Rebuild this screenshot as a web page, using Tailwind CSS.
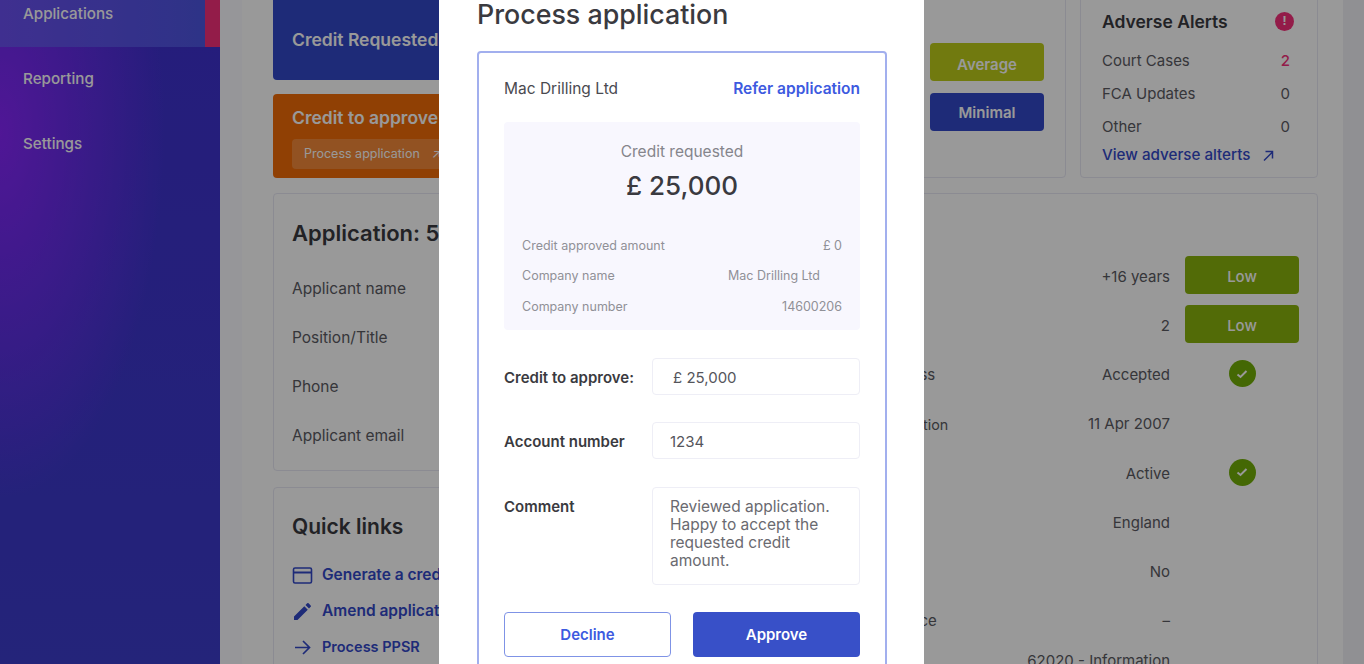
<!DOCTYPE html>
<html lang="en">
<head>
    <meta charset="UTF-8">
    <title>Process application</title>
    <script src="https://cdn.jsdelivr.net/npm/@tailwindcss/browser@4"></script>
</head>
<body class="relative h-[664px] w-[1364px] overflow-hidden bg-white font-['Inter',sans-serif] text-[#3a3a40]">

<!-- page behind the dialog -->
<div class="flex h-[664px]">
    <aside class="w-[220px] shrink-0 bg-[radial-gradient(ellipse_75%_55%_at_0%_20%,#8526fa,transparent),linear-gradient(180deg,#3f30cf,#3c3ccb)] text-[15.2px] font-medium text-white">
        <div class="-mt-[18px] flex h-[65px]">
            <a href="#" class="flex flex-1 items-center bg-[linear-gradient(90deg,#6a4ff0,#4d55e1)] pl-[23px]">Applications</a>
            <div class="w-[15px] bg-[#f5307a]"></div>
        </div>
        <a href="#" class="flex h-[65px] items-center pl-[23px]">Reporting</a>
        <a href="#" class="flex h-[65px] items-center pl-[23px]">Settings</a>
    </aside>

    <div class="w-[22px] shrink-0 bg-[#fbfbff]"></div>

    <main class="-mt-[20px] w-[1101px] shrink-0 pl-[31px] pr-[25px] text-[15px]">
        <!-- top row -->
        <div class="grid h-[198px] grid-cols-[367px_412px_238px] gap-x-[14px]">
            <div class="flex flex-col gap-[14px]">
                <div class="flex h-[100px] items-end rounded bg-[#3349c8] pb-[27px] pl-[19px] text-[17.5px] font-semibold text-white">Credit Requested</div>
                <div class="h-[84px] rounded bg-[#f06c08] pl-[19px] pt-[11px] text-white">
                    <p class="text-[17.5px] font-semibold">Credit to approve</p>
                    <a href="#" class="mt-[8px] flex h-[30px] w-[170px] items-center gap-3 rounded-sm bg-white/20 pl-[12px] text-[12.5px]">Process application <span>↗</span></a>
                </div>
            </div>
            <div class="flex flex-col items-end gap-[12px] rounded border border-[#e8e8f4] pr-[21px] pt-[62px]">
                <div class="flex h-[38px] w-[114px] items-center justify-center rounded bg-[#bccb1a] pt-[6px] font-semibold text-white">Average</div>
                <div class="flex h-[38px] w-[114px] items-center justify-center rounded bg-[#3349c8] pt-[3px] font-semibold text-white">Minimal</div>
            </div>
            <div class="rounded border border-[#e8e8f4] pl-[21px] pr-[27px] pt-[28px] text-[#5a5a62]">
                <div class="flex items-center justify-between">
                    <h3 class="text-[17.5px] font-semibold text-[#3a3a40]">Adverse Alerts</h3>
                    <span class="-mr-[4px] -mt-[2px] flex h-[19px] w-[19px] items-center justify-center rounded-full bg-[#f5307a] text-[12px] font-bold text-white">!</span>
                </div>
                <div class="mt-[16px] flex flex-col gap-[14px]">
                    <div class="flex h-[19px] items-center justify-between"><span>Court Cases</span><span class="font-medium text-[#f5307a]">2</span></div>
                    <div class="flex h-[19px] items-center justify-between"><span>FCA Updates</span><span>0</span></div>
                    <div class="flex h-[19px] items-center justify-between"><span>Other</span><span>0</span></div>
                </div>
                <a href="#" class="mt-[8px] flex items-center gap-3 text-[15.2px] font-medium text-[#3349c8]">View adverse alterts
                    <svg class="h-3 w-3" viewBox="0 0 12 12" fill="none" stroke="currentColor" stroke-width="1.5"><path d="M2 10.500L10.500 2M3.500 1.500h7v7"/></svg>
                </a>
            </div>
        </div>

        <!-- lower row -->
        <div class="mt-[15px] grid grid-cols-[367px_664px] gap-x-[14px]">
            <div class="flex flex-col gap-[16px]">
                <section class="h-[278px] rounded border border-[#e8e8f4] pl-[18px] pt-[24px] text-[15.5px] text-[#5a5a62]">
                    <h2 class="text-[22px] font-semibold leading-[30px] text-[#3a3a40]">Application: 5482</h2>
                    <div class="mt-[16px] flex flex-col">
                        <p class="flex h-[49px] items-center">Applicant name</p>
                        <p class="flex h-[49px] items-center">Position/Title</p>
                        <p class="flex h-[49px] items-center">Phone</p>
                        <p class="flex h-[49px] items-center">Applicant email</p>
                    </div>
                </section>
                <section class="h-[200px] rounded border border-[#e8e8f4] pl-[18px] pt-[24px]">
                    <h2 class="text-[21px] font-semibold leading-[30px]">Quick links</h2>
                    <div class="mt-[15px] flex flex-col text-[15.5px] font-semibold text-[#3349c8]">
                        <a href="#" class="flex h-[36px] items-center gap-[9px]">
                            <svg class="h-[21px] w-[21px]" viewBox="0 0 21 21" fill="none" stroke="currentColor" stroke-width="1.600"><rect x="1.500" y="3" width="18" height="15" rx="1.500"/><path d="M1.500 7.500h18" stroke-width="2"/></svg>
                            Generate a credit report
                        </a>
                        <a href="#" class="flex h-[36px] items-center gap-[9px]">
                            <svg class="h-[21px] w-[21px]" viewBox="0 0 21 21" fill="currentColor"><path d="M2 15.500V19h3.500L15.800 8.700l-3.500-3.500L2 15.500zM18.700 5.800a1 1 0 0 0 0-1.400l-2.100-2.100a1 1 0 0 0-1.400 0l-1.700 1.700 3.500 3.500 1.700-1.700z"/></svg>
                            Amend application
                        </a>
                        <a href="#" class="flex h-[36px] items-center gap-[9px] text-[14.5px]">
                            <svg class="h-[21px] w-[21px]" viewBox="0 0 21 21" fill="none" stroke="currentColor" stroke-width="1.700"><path d="M3 10.500h14.500M11 4l6.500 6.500L11 17"/></svg>
                            Process PPSR
                        </a>
                    </div>
                </section>
            </div>
            <section class="rounded border border-[#e8e8f4] pl-[150px] pr-[18px] pt-[56px] text-[#5a5a62]">
                <div class="flex h-[49.2px] items-center"><span class="flex-1"></span><span class="mt-[5px]">+16 years</span><div class="ml-[15px] flex h-[38px] w-[114px] items-center justify-center rounded bg-[#89b20c] pt-[5px] font-medium text-white">Low</div></div>
                <div class="flex h-[49.2px] items-center"><span class="flex-1"></span><span class="mt-[5px]">2</span><div class="ml-[15px] flex h-[38px] w-[114px] items-center justify-center rounded bg-[#89b20c] pt-[5px] font-medium text-white">Low</div></div>
                <div class="flex h-[49.2px] items-center"><span class="mt-[5px] flex-1">Terms of business</span><span class="mt-[5px]">Accepted</span>
                    <div class="ml-[15px] flex w-[114px] justify-center"><span class="mt-[2px] flex h-[27px] w-[27px] items-center justify-center rounded-full bg-[#72ad08]"><svg class="h-[14px] w-[14px]" viewBox="0 0 14 14" fill="none" stroke="#fff" stroke-width="2"><path d="M2.500 7.500l3 2.500 6-6"/></svg></span></div></div>
                <div class="flex h-[49.2px] items-center"><span class="mt-[5px] flex-1 text-[14.3px]">Date of incorporation</span><span class="mt-[5px]">11 Apr 2007</span><div class="ml-[15px] w-[114px]"></div></div>
                <div class="flex h-[49.2px] items-center"><span class="flex-1"></span><span class="mt-[5px]">Active</span>
                    <div class="ml-[15px] flex w-[114px] justify-center"><span class="mt-[2px] flex h-[27px] w-[27px] items-center justify-center rounded-full bg-[#72ad08]"><svg class="h-[14px] w-[14px]" viewBox="0 0 14 14" fill="none" stroke="#fff" stroke-width="2"><path d="M2.500 7.500l3 2.500 6-6"/></svg></span></div></div>
                <div class="flex h-[49.2px] items-center"><span class="flex-1"></span><span class="mt-[5px]">England</span><div class="ml-[15px] w-[114px]"></div></div>
                <div class="flex h-[49.2px] items-center"><span class="flex-1"></span><span class="mt-[5px]">No</span><div class="ml-[15px] w-[114px]"></div></div>
                <div class="flex h-[49.2px] items-center"><span class="mt-[5px] flex-1">Place of residence</span><span class="mt-[5px]">–</span><div class="ml-[15px] w-[114px]"></div></div>
                <div class="flex h-[49.2px] items-center"><span class="flex-1"></span><span class="-mt-[14px]">62020 - Information</span><div class="ml-[15px] w-[114px]"></div></div>
            </section>
        </div>
    </main>

    <div class="w-[21px] shrink-0 bg-[#f0f0f6]"></div>
</div>

<!-- dialog -->
<div class="absolute inset-0 bg-black/40">
    <div class="ml-[439px] h-[664px] w-[485px] bg-white pl-[38px] pr-[37px]">
        <h1 class="text-[26.8px] font-medium leading-[28px]">Process application</h1>
        <div class="mt-[23px] h-[640px] rounded border-2 border-[#a2afee] px-[25px] pt-[24px]">
            <div class="flex items-center justify-between text-[15.5px] text-[#4a4a50]">
                <span>Mac Drilling Ltd</span>
                <a href="#" class="font-semibold text-[#3d5ae0]">Refer application</a>
            </div>
            <div class="mt-[22px] h-[208px] rounded-sm bg-[#f8f7fe] px-[18px] pt-[18px]">
                <p class="text-center text-[15.5px] text-[#85858c]">Credit requested</p>
                <p class="mt-[5px] text-center text-[26px] font-medium leading-[34px]">£ 25,000</p>
                <div class="mt-[35px] flex flex-col gap-[13.5px] text-[12.5px] text-[#909097]">
                    <div class="flex h-[17px] items-center justify-between"><span>Credit approved amount</span><span>£ 0</span></div>
                    <div class="flex h-[17px] items-center justify-between"><span>Company name</span><span class="pr-[22px]">Mac Drilling Ltd</span></div>
                    <div class="flex h-[17px] items-center justify-between"><span>Company number</span><span>14600206</span></div>
                </div>
            </div>
            <form class="mt-[28px]">
                <div class="flex h-[37px] items-center justify-between">
                    <label class="pt-[2px] text-[15px] font-semibold" for="credit">Credit to approve:</label>
                    <input id="credit" type="text" value="£ 25,000" class="h-[37px] w-[208px] rounded-sm border border-[#eeeef6] pl-[20px] pt-[2px] text-[15px] text-[#55555b]">
                </div>
                <div class="mt-[27px] flex h-[37px] items-center justify-between">
                    <label class="pt-[2px] text-[15px] font-semibold" for="account">Account number</label>
                    <input id="account" type="text" value="1234" class="h-[37px] w-[208px] rounded-sm border border-[#eeeef6] pl-[17px] pt-[2px] text-[15px] text-[#55555b]">
                </div>
                <div class="mt-[28px] flex justify-between">
                    <label class="mt-[9px] text-[15px] font-semibold" for="comment">Comment</label>
                    <textarea id="comment" rows="4" class="h-[98px] w-[208px] resize-none overflow-hidden rounded-sm border border-[#eeeef6] pl-[17px] pr-[16px] pt-[10px] text-[15.5px] leading-[18px] text-[#6a6a70]">Reviewed application. Happy to accept the requested credit amount.</textarea>
                </div>
                <div class="mt-[27px] flex justify-between">
                    <button type="button" class="h-[45px] w-[167px] rounded border border-[#7f93e6] text-[15px] font-semibold text-[#3d5ae0]">Decline</button>
                    <button type="button" class="h-[45px] w-[167px] rounded bg-[#3850c8] text-[15px] font-semibold text-white">Approve</button>
                </div>
            </form>
        </div>
    </div>
</div>
</body>
</html>
